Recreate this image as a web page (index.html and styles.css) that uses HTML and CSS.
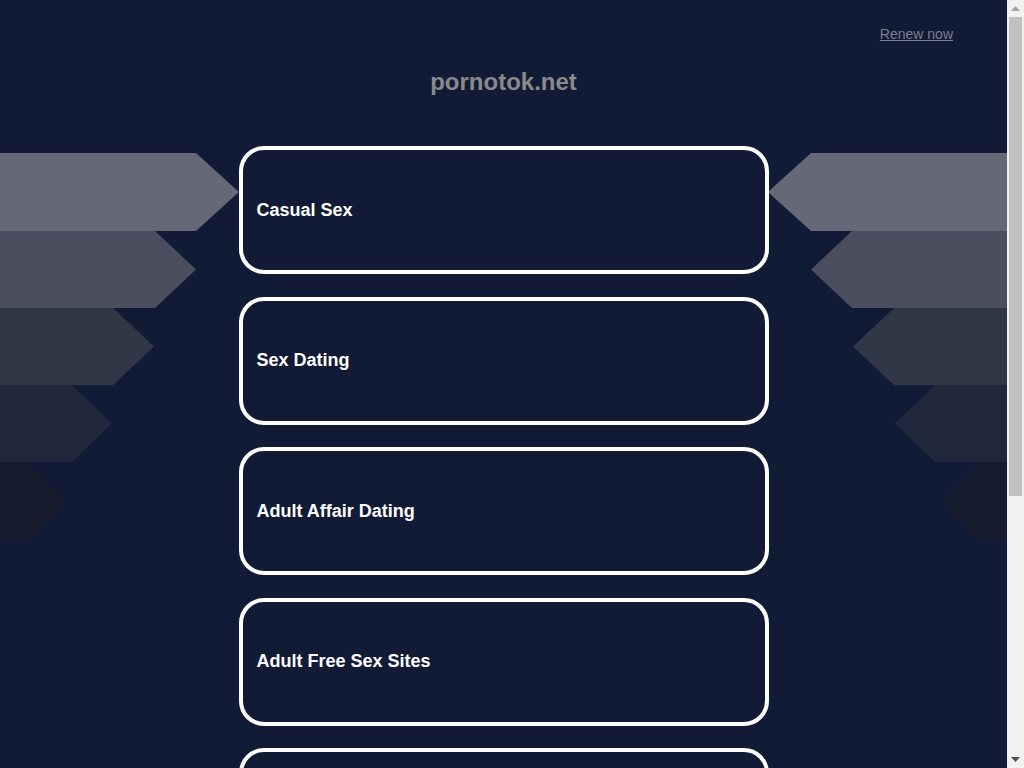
FILE: index.html
```html
<!DOCTYPE html>
<html lang="en">
<head>
<meta charset="utf-8">
<title>pornotok.net</title>
<link rel="stylesheet" href="styles.css">
</head>
<body>
<div class="page">
  <svg class="deco deco-left" width="239" height="387" viewBox="0 0 239 387" aria-hidden="true">
    <polygon points="0,0 196,0 239,39 196,78 0,78" fill="#646877"/>
    <polygon points="0,78 155,78 196,116.5 155,155 0,155" fill="#4a4e5e"/>
    <polygon points="0,155 113,155 154,193.5 113,232 0,232" fill="#323748"/>
    <polygon points="0,232 72,232 112,270.5 72,309 0,309" fill="#22283b"/>
    <polygon points="0,309 28,309 67,348 28,387 0,387" fill="#161b2e"/>
  </svg>
  <svg class="deco deco-right" width="238" height="387" viewBox="0 0 238 387" aria-hidden="true">
    <g transform="translate(238,0) scale(-1,1)">
      <polygon points="0,0 196,0 239,39 196,78 0,78" fill="#646877"/>
      <polygon points="0,78 155,78 196,116.5 155,155 0,155" fill="#4a4e5e"/>
      <polygon points="0,155 113,155 154,193.5 113,232 0,232" fill="#323748"/>
      <polygon points="0,232 72,232 112,270.5 72,309 0,309" fill="#22283b"/>
      <polygon points="0,309 28,309 67,348 28,387 0,387" fill="#161b2e"/>
    </g>
  </svg>

  <header class="top">
    <a class="renew" href="#">Renew now</a>
  </header>

  <h1 class="domain">pornotok.net</h1>

  <main class="links">
    <a class="link-box" href="#"><span>Casual Sex</span></a>
    <a class="link-box" href="#"><span>Sex Dating</span></a>
    <a class="link-box" href="#"><span>Adult Affair Dating</span></a>
    <a class="link-box" href="#"><span>Adult Free Sex Sites</span></a>
    <a class="link-box" href="#"><span>Find Local Hookups</span></a>
  </main>

  <footer class="foot">
    <p class="foot-text">Copyright &copy; pornotok.net. All rights reserved.</p>
    <p class="foot-text"><a href="#" class="foot-link">Privacy Policy</a></p>
  </footer>
</div>

<div class="scrollbar" aria-hidden="true">
  <div class="sb-btn">
    <svg width="9" height="5" viewBox="0 0 9 5"><polygon points="0,5 4.5,0 9,5" fill="#a3a3a3"/></svg>
  </div>
  <div class="sb-track">
    <div class="sb-thumb"></div>
  </div>
  <div class="sb-btn">
    <svg width="9" height="5" viewBox="0 0 9 5"><polygon points="0,0 9,0 4.5,5" fill="#505050"/></svg>
  </div>
</div>
</body>
</html>
```

FILE: styles.css
```css
html {
  scrollbar-width: none;
}

::-webkit-scrollbar {
  display: none;
}

html, body {
  margin: 0;
  padding: 0;
  background: #111b35;
}

body {
  font-family: "Liberation Sans", Arial, sans-serif;
  color: #ffffff;
  display: flex;
  align-items: flex-start;
}

.page {
  position: relative;
  flex: 1 1 auto;
  min-width: 0;
  min-height: 1177px;
  display: flex;
  flex-direction: column;
}

.deco {
  position: absolute;
  top: 153px;
  display: block;
}

.deco-left {
  left: 0;
}

.deco-right {
  right: 0;
}

.top {
  display: flex;
  justify-content: flex-end;
  padding: 26px 54px 0 0;
  height: 16px;
}

.renew {
  font-size: 14px;
  line-height: 16px;
  color: #7a7f8e;
  text-decoration: underline;
}

.domain {
  margin: 26px 0 0 0;
  text-align: center;
  font-size: 24px;
  line-height: 28px;
  font-weight: bold;
  color: #8a8a8a;
}

.links {
  margin-top: 50px;
  display: flex;
  flex-direction: column;
  align-items: center;
  gap: 22.5px;
  position: relative;
}

.link-box {
  box-sizing: border-box;
  width: 530px;
  height: 128px;
  border: 4px solid #ffffff;
  border-radius: 25px;
  display: flex;
  align-items: center;
  padding-left: 14px;
  color: #ffffff;
  text-decoration: none;
  font-size: 18px;
  font-weight: bold;
  background: #111b35;
}

.foot {
  margin-top: 120px;
  text-align: center;
}

.foot-text {
  margin: 0 0 10px 0;
  font-size: 12px;
  color: #7a7f8e;
}

.foot-link {
  color: #7a7f8e;
}

/* emulated classic browser scrollbar */
.scrollbar {
  position: sticky;
  top: 0;
  flex: 0 0 17px;
  width: 17px;
  height: 100vh;
  background: #f1f1f1;
  display: flex;
  flex-direction: column;
}

.sb-btn {
  flex: 0 0 17px;
  display: flex;
  align-items: center;
  justify-content: center;
}

.sb-btn svg {
  display: block;
}

.sb-track {
  flex: 1 1 auto;
  padding: 0 2px;
}

.sb-thumb {
  height: 479px;
  background: #c1c1c1;
}
```
